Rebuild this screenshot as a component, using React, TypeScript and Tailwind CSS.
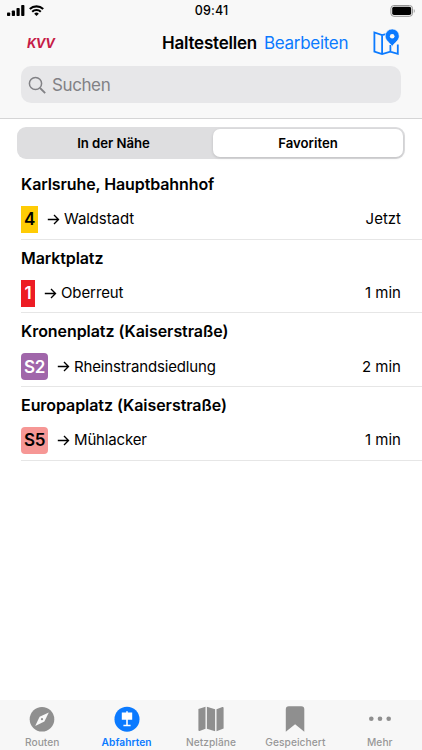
import React from 'react';

type Departure = {
  stop: string;
  line: string;
  direction: string;
  time: string;
  badge: string;
  titleTracking: string;
  tracking: string;
};

const departures: Departure[] = [
  { stop: 'Karlsruhe, Hauptbahnhof', line: '4', direction: 'Waldstadt', time: 'Jetzt', badge: 'w-[17px] bg-[#ffcc05] text-black', titleTracking: 'tracking-[-0.1px]', tracking: 'tracking-[-0.1px]' },
  { stop: 'Marktplatz', line: '1', direction: 'Oberreut', time: '1 min', badge: 'w-[14px] bg-[#ed1c24] text-white', titleTracking: 'tracking-[-0.1px]', tracking: 'tracking-[-0.1px]' },
  { stop: 'Kronenplatz (Kaiserstraße)', line: 'S2', direction: 'Rheinstrandsiedlung', time: '2 min', badge: 'w-[27px] rounded-[4px] bg-[#a066aa] text-white', titleTracking: 'tracking-[-0.06px]', tracking: 'tracking-[-0.16px]' },
  { stop: 'Europaplatz (Kaiserstraße)', line: 'S5', direction: 'Mühlacker', time: '1 min', badge: 'w-[27px] rounded-[4px] bg-[#f69795] text-black', titleTracking: 'tracking-[-0.06px]', tracking: 'tracking-[-0.15px]' },
];

function StatusBar() {
  return (
    <div className="grid h-[22px] grid-cols-3 items-center pl-[7px] pr-[6px]">
      <div className="flex items-center gap-[4px]">
        <svg width="18" height="12" viewBox="0 0 18 12">
          <rect x="0" y="7.4" width="3.2" height="3.6" rx=".8" />
          <rect x="4.8" y="5.5" width="3.2" height="5.5" rx=".8" />
          <rect x="9.5" y="3" width="3.2" height="8" rx=".8" />
          <rect x="14.2" y="0" width="3.2" height="11" rx=".8" />
        </svg>
        <svg width="15" height="12" viewBox="0 0 15 12" fill="none" stroke="#000" strokeWidth="2.1">
          <path d="M.8 4.1a9.7 9.7 0 0 1 13.4 0" />
          <path d="M3.2 6.8a6.2 6.2 0 0 1 8.6 0" />
          <path d="M7.5 11 5.2 8.7a3.3 3.3 0 0 1 4.6 0Z" fill="#000" stroke="none" />
        </svg>
      </div>
      <div className="pt-px text-center text-[12.5px] font-medium tracking-[0.15px]">09:41</div>
      <svg className="justify-self-end" width="26" height="12" viewBox="0 0 26 12">
        <rect x=".9" y=".5" width="21.6" height="10.8" rx="3" fill="none" stroke="#929292" />
        <rect x="2.2" y="1.8" width="19" height="8.2" rx="1.8" />
        <path d="M23.8 3.9v4c1.3-.5 1.3-3.5 0-4Z" fill="#999" />
      </svg>
    </div>
  );
}

function Header() {
  return (
    <header className="h-[119px] shrink-0 border-b border-[#d5d5d6] bg-[#f8f8f8]">
      <StatusBar />
      <div className="flex h-[44px] items-center pl-[27px] pr-[22px]">
        <div className="pb-px text-[13px] font-bold italic tracking-[-0.5px] text-[#c61c48]">KVV</div>
        <div className="ml-auto flex items-center text-[17px]">
          <h1 className="w-[96px] whitespace-nowrap font-semibold tracking-[-0.22px]">Haltestellen</h1>
          <button className="ml-[6px] w-[84px] whitespace-nowrap text-left tracking-[-0.3px] text-[#0b7aff]">Bearbeiten</button>
          <svg className="mb-[3px] ml-[25px]" width="27" height="27" viewBox="0 0 27 27" fill="none" stroke="#0b7aff" strokeWidth="1.8">
            <path d="M13 5.2 9.1 6.1 1.4 3.5v19.2l7.7 2.3 8.2-2.4 7.5 2.3V15.5M9.1 6v19M17.4 16v6.7" />
            <path d="M19.2 0a7 7 0 0 0-7 7.1c0 4.8 5.4 7.2 7 10.4 1.6-3.2 7-5.6 7-10.4a7 7 0 0 0-7-7.1Z" fill="#0b7aff" stroke="#f8f8f8" strokeWidth=".6" />
            <circle cx="19.2" cy="7.3" r="2.3" fill="#f8f8f8" stroke="none" />
          </svg>
        </div>
      </div>
      <div className="mx-[21px] flex h-[37px] items-center rounded-[10px] bg-[#e7e7e9] pl-[7px] pt-[2px] text-[17px] tracking-[-0.4px] text-[#818185]">
        <svg className="mb-[2px] mr-[6px]" width="18" height="18" viewBox="0 0 18 18" fill="none" stroke="#818185" strokeWidth="1.5">
          <circle cx="7.5" cy="7.5" r="6.1" />
          <path d="m12 12 5.2 5.2" strokeWidth="1.8" />
        </svg>
        Suchen
      </div>
    </header>
  );
}

function DepartureRow({ item }: { item: Departure }) {
  return (
    <li className="ml-[21px] h-[73.7px] border-b border-[#e6e6e6] pr-[21px] pt-[8px]">
      <h2 className={`h-[22px] whitespace-nowrap text-[16px] font-semibold leading-[21px] ${item.titleTracking}`}>{item.stop}</h2>
      <div className="mt-[7px] flex h-[33px] items-center text-[15px]">
        <span className={`flex h-[27px] shrink-0 items-center justify-center pt-px text-[17px] font-semibold tracking-[-0.3px] ${item.badge}`}>{item.line}</span>
        <svg className="ml-[9px]" width="13" height="11" viewBox="0 0 13 11" fill="none" stroke="#000" strokeWidth="1.35">
          <path d="M.8 5.5h10.6M7 1l4.5 4.5L7 10" />
        </svg>
        <span className={`ml-[4px] ${item.tracking}`}>{item.direction}</span>
        <span className="ml-auto">{item.time}</span>
      </div>
    </li>
  );
}

function Tab({ label, active, children }: { label: string; active?: boolean; children: React.ReactNode }) {
  return (
    <div className={`flex flex-col items-center pt-[5px] text-[10.2px] leading-[14px] ${active ? 'font-semibold text-[#0b7aff]' : 'font-medium text-[#979797]'}`}>
      <svg width="28" height="28" viewBox="0 0 28 28" fill={active ? '#0b7aff' : '#8f8f8f'}>{children}</svg>
      <span className="mt-[2px] tracking-[0.05px]">{label}</span>
    </div>
  );
}

export default function App() {
  return (
    <div className="flex h-[750px] w-[422px] flex-col overflow-hidden bg-white font-['Inter','Noto_Sans',sans-serif] text-black">
      <Header />
      <main className="flex-1">
        <div className="ml-[17px] mt-[8px] grid h-[32px] w-[388px] grid-cols-2 rounded-[9px] bg-[#dedee0] p-[2px] text-center text-[13.2px] font-semibold leading-[28px]">
          <div className="pr-[3px] tracking-[-0.05px]">In der Nähe</div>
          <div className="ml-[2px] rounded-[7px] bg-white shadow-[0_1px_3px_rgba(0,0,0,0.15)]">Favoriten</div>
        </div>
        <ul className="mt-[7px]">
          {departures.map((item) => <DepartureRow key={item.stop} item={item} />)}
        </ul>
      </main>
      <nav className="grid h-[50px] shrink-0 grid-cols-5 bg-[#f7f7f7]">
        <Tab label="Routen">
          <circle cx="14" cy="14.2" r="12.3" />
          <path d="m20.8 7.4-9.2 4.4-4.4 9.2 9.2-4.4Z" fill="#f8f8f8" />
          <circle cx="14" cy="14.2" r="1.1" />
        </Tab>
        <Tab label="Abfahrten" active>
          <circle cx="14" cy="14.2" r="12.5" />
          <path d="M13.2 6.2h1.6v1.2h4.4v7.4h-4.4v5h2.8v1.5h-7.2v-1.5h2.8v-5H8.8V7.4h4.4Z" fill="#fff" />
        </Tab>
        <Tab label="Netzpläne">
          <path d="M1.4 4.1 8.5 1.8v22L2.6 26q-1.2.3-1.2-1Zm8.5-2.3 8.2 2.4v22l-8.2-2.4Zm9.6 2.4 5.9-2.2q1.2-.3 1.2 1v20.6l-7.1 2.6Z" />
        </Tab>
        <Tab label="Gespeichert">
          <path d="M4.8 4.2q0-3 3-3h12.5q3 0 3 3v22.6l-9.2-7.5-9.3 7.5Z" />
        </Tab>
        <Tab label="Mehr">
          <circle cx="5.3" cy="13.8" r="2.3" />
          <circle cx="14" cy="13.8" r="2.3" />
          <circle cx="22.7" cy="13.8" r="2.3" />
        </Tab>
      </nav>
    </div>
  );
}
